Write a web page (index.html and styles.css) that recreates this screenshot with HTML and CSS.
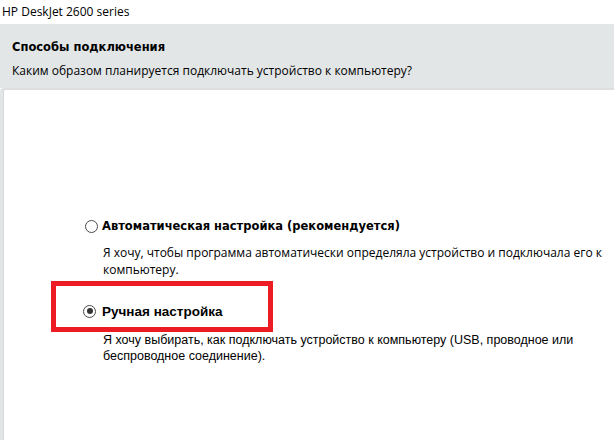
FILE: index.html
```html
<!DOCTYPE html>
<html lang="ru">
<head>
<meta charset="utf-8">
<link rel="stylesheet" href="styles.css">
</head>
<body>
<div class="titlebar">HP DeskJet 2600 series</div>
<div class="header">
  <div class="h-title">Способы подключения</div>
  <div class="h-sub">Каким образом планируется подключать устройство к компьютеру?</div>
</div>
<div class="panel">
  <div class="option opt-auto">
    <div class="opt-row">
      <span class="radio"></span>
      <span class="opt-label">Автоматическая настройка (рекомендуется)</span>
    </div>
    <div class="opt-desc">Я хочу, чтобы программа автоматически определяла устройство и подключала его к компьютеру.</div>
  </div>
  <div class="option opt-manual">
    <div class="opt-row">
      <span class="radio checked"></span>
      <span class="opt-label big">Ручная настройка</span>
    </div>
    <div class="opt-desc">Я хочу выбирать, как подключать устройство к компьютеру (USB, проводное или беспроводное соединение).</div>
  </div>
  <div class="highlight"></div>
</div>
</body>
</html>
```
FILE: styles.css
```css
html, body {
  margin: 0;
  padding: 0;
  background: #ffffff;
  width: 614px;
  height: 440px;
  overflow: hidden;
}
body {
  font-family: "Open Sans", "Noto Sans", sans-serif;
  color: #000;
  display: flex;
  flex-direction: column;
}
.titlebar {
  height: 24px;
  line-height: 23px;
  padding-left: 2px;
  font-size: 12px;
  color: #000;
}
.header {
  background: #e3e6e7;
  height: 64px;
  box-sizing: border-box;
  padding: 15px 12px 0;
}
.h-title {
  font-family: "DejaVu Sans", sans-serif;
  font-weight: bold;
  font-size: 11.5px;
  line-height: 16px;
}
.h-sub {
  margin-top: 7px;
  font-size: 12px;
  line-height: 17px;
}
.panel {
  flex: 1;
  position: relative;
  margin-left: 3px;
  background: #fff;
  border-top: 2px solid #dcdedf;
  border-left: 1px solid #d6d9da;
  border-top-left-radius: 3px;
  padding: 128px 0 0 81px;
  box-sizing: border-box;
  background-clip: padding-box;
  box-shadow: -3px 0 0 #e3e6e7;
}
.opt-row {
  display: flex;
  align-items: center;
  height: 16px;
}
.radio {
  width: 11px;
  height: 11px;
  border: 1px solid #4a4a4a;
  border-radius: 50%;
  box-sizing: content-box;
  background: #fff;
  position: relative;
  flex: none;
}
.radio.checked::after {
  content: "";
  position: absolute;
  left: 2.5px;
  top: 2.5px;
  width: 6px;
  height: 6px;
  border-radius: 50%;
  background: #333;
}
.opt-label {
  margin-left: 4px;
  font-family: "DejaVu Sans", sans-serif;
  font-weight: bold;
  font-size: 11.5px;
}
.opt-label.big {
  font-family: "Liberation Sans", Arial, sans-serif;
  font-size: 13.5px;
  margin-left: 6px;
}
.opt-desc {
  margin-left: 18px;
  margin-top: 10px;
  width: 500px;
  font-size: 12px;
  line-height: 17px;
}
.opt-manual {
  margin-top: 25px;
  margin-left: -2px;
}
.opt-manual .opt-desc {
  margin-left: 20px;
  margin-top: 13px;
  font-family: "Liberation Sans", Arial, sans-serif;
  font-size: 12.5px;
  line-height: 16px;
}
.highlight {
  position: absolute;
  left: 47px;
  top: 191px;
  width: 212px;
  height: 41px;
  border: 5px solid #ed1c24;
}
```
